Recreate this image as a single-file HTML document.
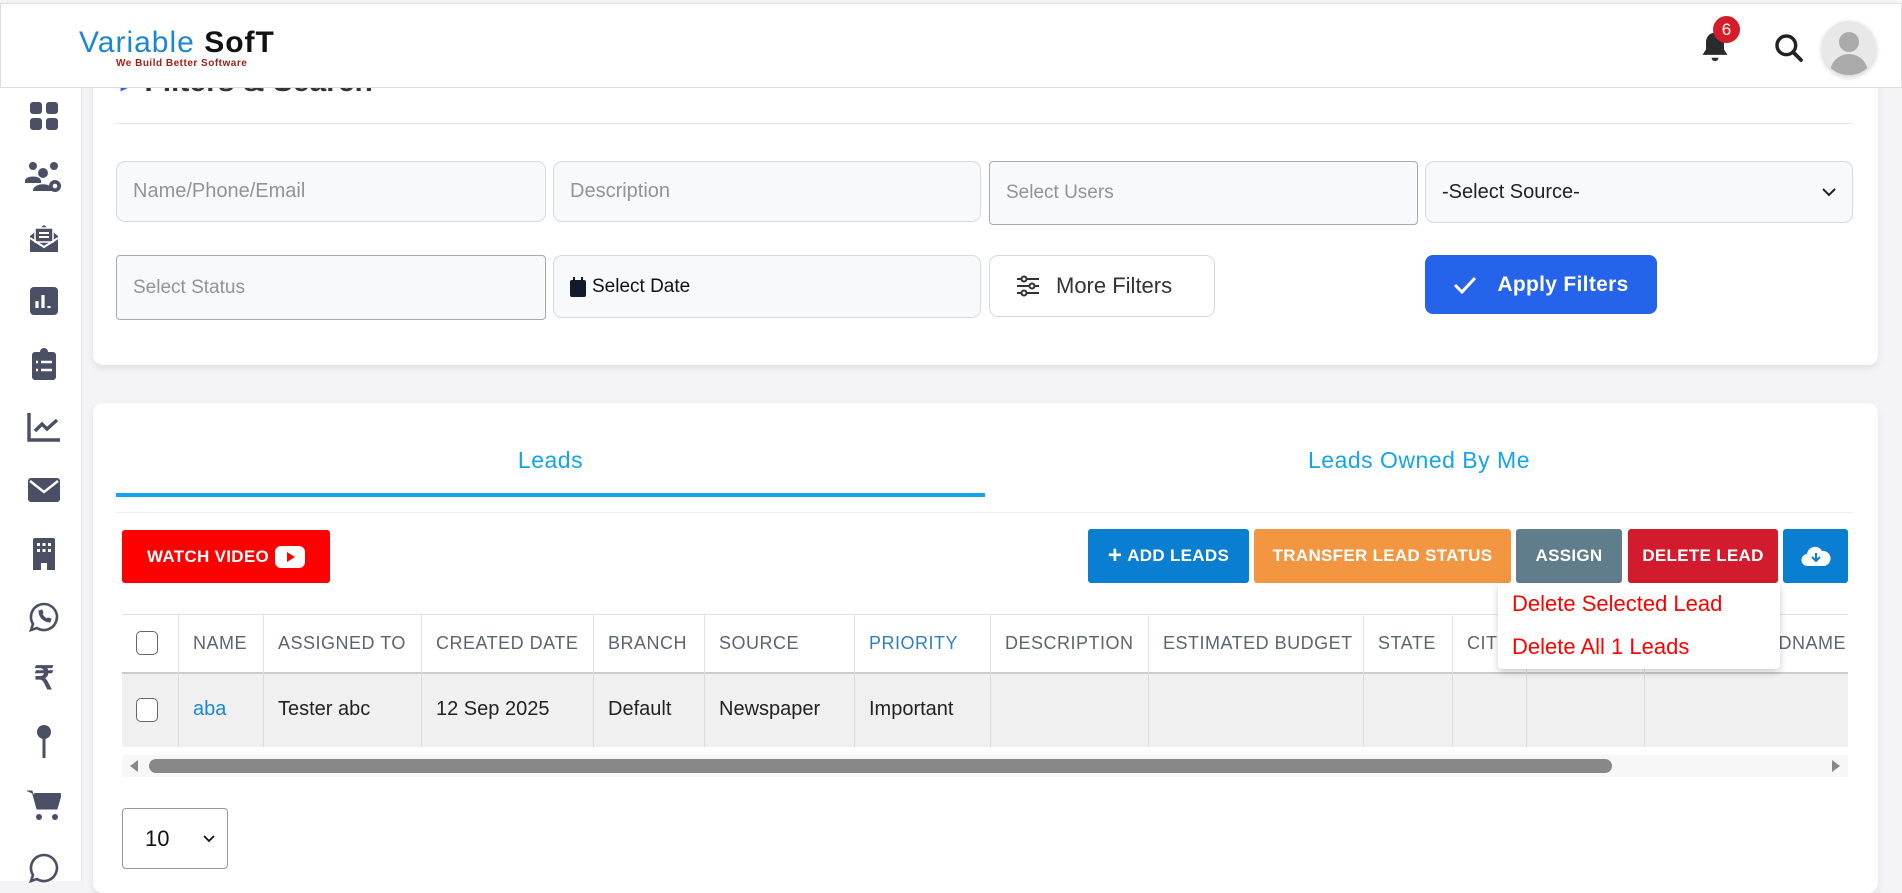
<!DOCTYPE html>
<html><head><meta charset="utf-8"><style>
*{box-sizing:border-box;margin:0;padding:0}
body{width:1902px;height:881px;overflow:hidden;background:#f4f4f6;font-family:"Liberation Sans",sans-serif;position:relative}
.abs{position:absolute}
.hdr{left:0;top:3px;width:1902px;height:85px;background:#fff;border:1px solid #ddd;z-index:5}
.side{left:0;top:88px;width:82px;height:793px;background:#fff;border-right:1px solid #e4e4e8}
.card{background:#fff;border-radius:10px;box-shadow:0 4px 8px rgba(0,0,0,.08)}
.inp{background:#f8f9fb;border:1px solid #d5dbe3;border-radius:9px;font-size:20px;color:#8f949c;padding:0 16px;display:flex;align-items:center}
.btn{color:#fff;font-weight:bold;font-size:17px;display:flex;align-items:center;justify-content:center;border-radius:3px;letter-spacing:.3px}
.th{top:614px;height:58px;font-size:18px;color:#5b6470;display:flex;align-items:center;padding-left:14px;border-left:1px solid #e2e2e2;letter-spacing:.5px}
.td{top:672px;height:75px;font-size:20px;color:#222;display:flex;align-items:center;padding-left:14px;border-left:1px solid #dcdcdc}
.ic{left:22px;width:44px;height:36px;display:flex;justify-content:center;align-items:center}
</style></head><body>
<div class="abs hdr">
 <div class="abs" style="left:78px;top:22px;font-size:30px;letter-spacing:1px;font-weight:bold"><span style="color:#1b86d2;font-weight:normal">Variable</span> <span style="color:#111">SofT</span></div>
 <div class="abs" style="left:115px;top:54px;font-size:10px;color:#a0211a;font-weight:bold;letter-spacing:.5px">We Build Better Software</div>
 <svg class="abs" style="left:1697px;top:26px" width="34" height="36" viewBox="0 0 24 26"><path d="M12 2c-4 0-6.5 3-6.5 7v5L3 18h18l-2.5-4V9C18.5 5 16 2 12 2z" fill="#2b2b2b"/><path d="M9.5 20a2.5 2.5 0 0 0 5 0z" fill="#2b2b2b"/></svg>
 <div class="abs" style="left:1712px;top:12px;width:27px;height:27px;border-radius:50%;background:#d31d2b;color:#fff;font-size:17px;display:flex;align-items:center;justify-content:center">6</div>
 <svg class="abs" style="left:1772px;top:28px" width="32" height="32" viewBox="0 0 24 24"><circle cx="10" cy="10" r="7" fill="none" stroke="#222" stroke-width="2.6"/><path d="M15 15l6 6" stroke="#222" stroke-width="2.8" stroke-linecap="round"/></svg>
 <div class="abs" style="left:1821px;top:17px;width:54px;height:54px;border-radius:50%;background:#e8e8e8;box-shadow:0 2px 6px rgba(0,0,0,.2);overflow:hidden">
  <div class="abs" style="left:17px;top:11px;width:20px;height:20px;border-radius:50%;background:#aaa"></div>
  <div class="abs" style="left:8px;top:33px;width:38px;height:24px;border-radius:19px 19px 0 0;background:#aaa"></div>
 </div>
</div>
<div class="abs side">
 <div class="abs ic" style="top:10px"><svg width="30" height="30" viewBox="0 0 30 30" fill="#4a4f66"><rect x="1" y="1" width="12" height="12" rx="3"/><rect x="17" y="1" width="12" height="12" rx="3"/><rect x="1" y="17" width="12" height="12" rx="3"/><rect x="17" y="17" width="12" height="12" rx="3"/></svg></div>
 <div class="abs ic" style="top:71px"><svg width="40" height="32" viewBox="0 0 40 32" fill="#4a4f66"><circle cx="9" cy="5" r="4"/><circle cx="30" cy="5" r="4"/><circle cx="19" cy="12" r="5"/><path d="M1 20c0-6 16-6 16 0v2H1z"/><path d="M9 30c0-9 20-9 20 0z"/><circle cx="31" cy="25" r="6"/><circle cx="31" cy="25" r="2.3" fill="#fff"/></svg></div>
 <div class="abs ic" style="top:133px"><svg width="32" height="32" viewBox="0 0 32 32" fill="#4a4f66"><path d="M2 13l14-11 14 11v16H2z"/><rect x="7" y="5" width="18" height="14" fill="#4a4f66" stroke="#fff" stroke-width="1.5"/><path d="M11 10h10M11 14h10" stroke="#fff" stroke-width="2"/><path d="M2 15l14 9 14-9" fill="none" stroke="#fff" stroke-width="2"/></svg></div>
 <div class="abs ic" style="top:195px"><svg width="28" height="28" viewBox="0 0 28 28"><rect width="28" height="28" rx="4" fill="#4a4f66"/><path d="M7 21v-7M13 21V8M19 21v-2" stroke="#fff" stroke-width="3.2"/></svg></div>
 <div class="abs ic" style="top:258px"><svg width="26" height="32" viewBox="0 0 26 32"><rect x="1" y="4" width="24" height="28" rx="3" fill="#4a4f66"/><circle cx="13" cy="4" r="4" fill="#4a4f66"/><path d="M5 14h2M10 14h11M5 22h2M10 22h11" stroke="#fff" stroke-width="2.4"/></svg></div>
 <div class="abs ic" style="top:321px"><svg width="34" height="30" viewBox="0 0 34 30" fill="none" stroke="#4a4f66" stroke-width="3.4"><path d="M2 1v27h31"/><path d="M8 19l7-7 5 5 10-9"/></svg></div>
 <div class="abs ic" style="top:384px"><svg width="32" height="24" viewBox="0 0 32 24"><rect width="32" height="24" rx="3" fill="#4a4f66"/><path d="M2 3l14 11 14-11" fill="none" stroke="#fff" stroke-width="2.4"/></svg></div>
 <div class="abs ic" style="top:448px"><svg width="22" height="32" viewBox="0 0 22 32"><path d="M0 2q0-2 2-2h18q2 0 2 2v30h-8v-7h-6v7H0z" fill="#4a4f66"/><g fill="#fff"><rect x="4" y="5" width="3" height="3"/><rect x="9.5" y="5" width="3" height="3"/><rect x="15" y="5" width="3" height="3"/><rect x="4" y="11" width="3" height="3"/><rect x="9.5" y="11" width="3" height="3"/><rect x="15" y="11" width="3" height="3"/></g></svg></div>
 <div class="abs ic" style="top:511px"><svg width="30" height="30" viewBox="0 0 30 30" fill="none" stroke="#4a4f66" stroke-width="2.6"><path d="M15 2a13 13 0 1 1-7 24l-6 2 2-6A13 13 0 0 1 15 2z"/><path d="M10 9c0 6 5 11 11 11l1-3-3-1-1 1c-2-1-4-3-5-5l1-1-1-3z" fill="#4a4f66" stroke-width="1"/></svg></div>
 <div class="abs ic" style="top:572px;font-size:32px;font-weight:bold;color:#4a4f66">₹</div>
 <div class="abs ic" style="top:636px"><svg width="14" height="34" viewBox="0 0 14 34"><circle cx="7" cy="7" r="7" fill="#4a4f66"/><rect x="5.5" y="12" width="3" height="21" fill="#4a4f66"/></svg></div>
 <div class="abs ic" style="top:699px"><svg width="34" height="32" viewBox="0 0 34 32" fill="#4a4f66"><path d="M0 2h5l5 18h20l4-14H8" stroke="#4a4f66" stroke-width="1"/><path d="M7 4h27l-4 16H10z"/><circle cx="12" cy="28" r="3"/><circle cx="28" cy="28" r="3"/></svg></div>
 <div class="abs ic" style="top:762px"><svg width="30" height="30" viewBox="0 0 30 30" fill="none" stroke="#4a4f66" stroke-width="2.6"><path d="M15 2a13 13 0 1 1-7 24l-6 2 2-6A13 13 0 0 1 15 2z"/></svg></div>
</div>

<div class="abs card" style="left:93px;top:60px;width:1785px;height:305px">
 <div class="abs" style="left:28px;top:4px;font-size:30px;font-weight:bold;color:#333"><span style="color:#2563eb">▸</span> Filters &amp; Search</div>
 <div class="abs" style="left:23px;top:63px;width:1737px;height:1px;background:#e3e6ea"></div>
</div>
<div class="abs inp" style="left:116px;top:161px;width:430px;height:61px">Name/Phone/Email</div>
<div class="abs inp" style="left:553px;top:161px;width:428px;height:61px">Description</div>
<div class="abs inp" style="left:989px;top:161px;width:429px;height:64px;border-color:#aaa;border-radius:4px;font-size:19px">Select Users</div>
<div class="abs inp" style="left:1425px;top:161px;width:428px;height:62px;color:#222;justify-content:space-between">-Select Source-<svg width="14" height="10" viewBox="0 0 14 10"><path d="M1 2l6 6 6-6" fill="none" stroke="#222" stroke-width="2"/></svg></div>
<div class="abs inp" style="left:116px;top:255px;width:430px;height:65px;border-color:#aaa;border-radius:4px;font-size:19px">Select Status</div>
<div class="abs inp" style="left:553px;top:255px;width:428px;height:63px;color:#111;font-size:19px"><svg width="16" height="20" viewBox="0 0 16 20" style="margin-right:6px"><rect x="0" y="3" width="16" height="17" rx="2" fill="#111a2c"/><rect x="3" y="0" width="2" height="5" fill="#111a2c"/><rect x="11" y="0" width="2" height="5" fill="#111a2c"/></svg>Select Date</div>
<div class="abs inp" style="left:989px;top:255px;width:226px;height:62px;background:#fff;color:#333;font-size:22px;padding-left:26px"><svg width="24" height="22" viewBox="0 0 24 22" style="margin-right:16px" stroke="#333" stroke-width="2" fill="none"><path d="M1 4h22M1 11h22M1 18h22"/><circle cx="8" cy="4" r="2.5" fill="#fff"/><circle cx="16" cy="11" r="2.5" fill="#fff"/><circle cx="8" cy="18" r="2.5" fill="#fff"/></svg>More Filters</div>
<div class="abs btn" style="left:1425px;top:255px;width:232px;height:59px;background:#2563eb;border-radius:8px;font-size:21px"><svg width="24" height="18" viewBox="0 0 24 18" style="margin-right:20px"><path d="M2 9l7 7L22 2" fill="none" stroke="#fff" stroke-width="3"/></svg>Apply Filters</div>

<div class="abs card" style="left:93px;top:403px;width:1785px;height:490px"></div>
<div class="abs" style="left:116px;top:447px;width:869px;text-align:center;font-size:23px;color:#14a4ec;letter-spacing:.5px">Leads</div>
<div class="abs" style="left:985px;top:447px;width:868px;text-align:center;font-size:23px;color:#14a4ec;letter-spacing:.5px">Leads Owned By Me</div>
<div class="abs" style="left:116px;top:493px;width:869px;height:4px;background:#14a4ec"></div>
<div class="abs" style="left:116px;top:512px;width:1737px;height:1px;background:#eee"></div>

<div class="abs btn" style="left:122px;top:530px;width:208px;height:53px;background:#ff0000">WATCH VIDEO<span style="display:inline-block;margin-left:6px;width:30px;height:22px;background:#fff;border-radius:6px;position:relative"><span style="position:absolute;left:12px;top:6px;border-left:8px solid #f00;border-top:5px solid transparent;border-bottom:5px solid transparent"></span></span></div>
<div class="abs btn" style="left:1088px;top:529px;width:161px;height:54px;background:#0a7ed0"><span style="font-size:24px;margin-right:5px">+</span>ADD LEADS</div>
<div class="abs btn" style="left:1254px;top:529px;width:257px;height:54px;background:#f39642">TRANSFER LEAD STATUS</div>
<div class="abs btn" style="left:1516px;top:529px;width:106px;height:54px;background:#607d8b">ASSIGN</div>
<div class="abs btn" style="left:1628px;top:529px;width:150px;height:54px;background:#d21c2d">DELETE LEAD</div>
<div class="abs btn" style="left:1783px;top:529px;width:65px;height:54px;background:#0a7ed0"><svg width="30" height="22" viewBox="0 0 30 22"><path d="M7 21a6 6 0 0 1-1-12 8 8 0 0 1 15-3 7 7 0 0 1 2 15z" fill="#fff"/><path d="M15 8v8M11 12l4 4 4-4" stroke="#0a7ed0" stroke-width="2" fill="none"/></svg></div>

<div class="abs" style="left:122px;top:614px;width:1726px;height:133px;border-top:1px solid #e2e2e2;border-bottom:2px solid #ccc"></div>
<div class="abs" style="left:122px;top:672px;width:1726px;height:75px;background:#f0f0f0;border-top:2px solid #ccc"></div>
<div class="abs th" style="left:122px;width:56px;border-left:none"><span style="width:22px;height:24px;border:1.5px solid #666;border-radius:5px;background:#fff;display:block"></span></div>
<div class="abs th" style="left:178px;width:85px">NAME</div>
<div class="abs th" style="left:263px;width:158px">ASSIGNED TO</div>
<div class="abs th" style="left:421px;width:172px">CREATED DATE</div>
<div class="abs th" style="left:593px;width:111px">BRANCH</div>
<div class="abs th" style="left:704px;width:150px">SOURCE</div>
<div class="abs th" style="left:854px;width:136px;color:#2f7fbf">PRIORITY</div>
<div class="abs th" style="left:990px;width:158px">DESCRIPTION</div>
<div class="abs th" style="left:1148px;width:215px">ESTIMATED BUDGET</div>
<div class="abs th" style="left:1363px;width:89px">STATE</div>
<div class="abs th" style="left:1452px;width:74px">CITY</div>
<div class="abs th" style="left:1526px;width:118px"></div>
<div class="abs th" style="left:1644px;width:204px;justify-content:flex-end;padding-right:2px;overflow:hidden">LEADNAME</div>
<div class="abs td" style="left:122px;width:56px;border-left:none"><span style="width:22px;height:24px;border:1.5px solid #666;border-radius:5px;background:#fff;display:block"></span></div>
<div class="abs td" style="left:178px;width:85px;color:#1b86d2">aba</div>
<div class="abs td" style="left:263px;width:158px">Tester abc</div>
<div class="abs td" style="left:421px;width:172px">12 Sep 2025</div>
<div class="abs td" style="left:593px;width:111px">Default</div>
<div class="abs td" style="left:704px;width:150px">Newspaper</div>
<div class="abs td" style="left:854px;width:136px">Important</div>
<div class="abs td" style="left:990px;width:158px"></div>
<div class="abs td" style="left:1148px;width:215px"></div>
<div class="abs td" style="left:1363px;width:89px"></div>
<div class="abs td" style="left:1452px;width:74px"></div>
<div class="abs td" style="left:1526px;width:118px"></div>
<div class="abs td" style="left:1644px;width:204px"></div>

<div class="abs" style="left:122px;top:755px;width:1726px;height:22px;background:#f7f7f7"></div>
<div class="abs" style="left:130px;top:760px;border-right:8px solid #888;border-top:6px solid transparent;border-bottom:6px solid transparent"></div>
<div class="abs" style="left:1832px;top:760px;border-left:8px solid #888;border-top:6px solid transparent;border-bottom:6px solid transparent"></div>
<div class="abs" style="left:149px;top:759px;width:1463px;height:14px;border-radius:7px;background:#888"></div>

<div class="abs" style="left:1498px;top:583px;width:282px;height:86px;background:#fff;border-radius:4px;box-shadow:0 3px 8px rgba(0,0,0,.2);color:#f00;font-size:22px">
 <div class="abs" style="left:14px;top:8px">Delete Selected Lead</div>
 <div class="abs" style="left:14px;top:51px">Delete All 1 Leads</div>
</div>

<div class="abs" style="left:122px;top:808px;width:106px;height:61px;border:1px solid #999;border-radius:4px;background:#fff;font-size:22px;color:#111;display:flex;align-items:center;justify-content:space-between;padding:0 12px 0 22px">10<svg width="12" height="8" viewBox="0 0 12 8"><path d="M1 1l5 5 5-5" fill="none" stroke="#111" stroke-width="1.8"/></svg></div>
</body></html>
